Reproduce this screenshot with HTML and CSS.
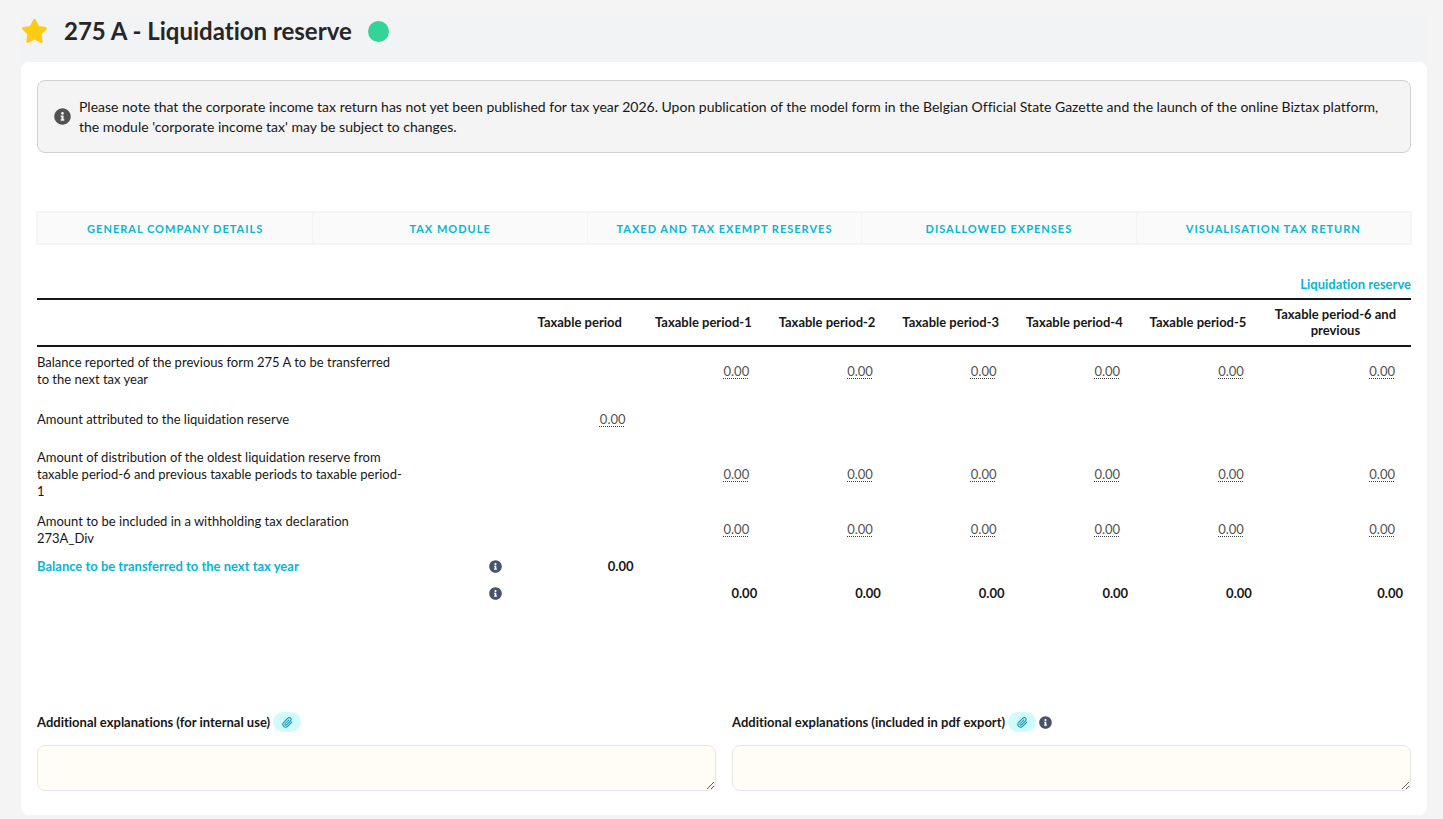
FILE: index.html
```html
<!DOCTYPE html>
<html lang="en">
<head>
<meta charset="utf-8">
<meta name="viewport" content="width=device-width, initial-scale=1">
<title>275 A - Liquidation reserve</title>
<link rel="stylesheet" href="styles.css">
</head>
<body>
<svg class="sprite" aria-hidden="true">
  <symbol id="icon-star" viewBox="0 0 576 512"><path d="M316.900 18C311.600 7 300.400 0 288.100 0s-23.400 7-28.800 18L195 150.300 51.400 171.500c-12 1.800-22 10.200-25.700 21.700s-.7 24.200 7.900 32.700L137.800 329 113.200 474.700c-2 12 3 24.200 12.900 31.300s23 8 33.800 2.300l128.300-68.500 128.300 68.500c10.800 5.700 23.900 4.900 33.800-2.300s14.900-19.300 12.900-31.300L438.500 329 542.700 225.900c8.600-8.500 11.700-21.200 7.900-32.700s-13.700-19.900-25.700-21.700L381.200 150.300 316.900 18z"/></symbol>
  <symbol id="icon-info" viewBox="0 0 512 512"><path d="M256 8C119 8 8 119.100 8 256c0 137 111 248 248 248s248-111 248-248C504 119.100 393 8 256 8zm0 110c23.200 0 42 18.800 42 42s-18.800 42-42 42-42-18.800-42-42 18.800-42 42-42zm56 254c0 6.600-5.400 12-12 12h-88c-6.600 0-12-5.400-12-12v-24c0-6.600 5.400-12 12-12h12v-64h-12c-6.600 0-12-5.400-12-12v-24c0-6.600 5.400-12 12-12h64c6.600 0 12 5.400 12 12v100h12c6.600 0 12 5.400 12 12v24z"/></symbol>
  <symbol id="icon-clip" viewBox="0 0 24 24"><path fill="none" stroke="currentColor" stroke-width="2.200" stroke-linecap="round" stroke-linejoin="round" d="M21.400 11.100l-9.200 9.200a6 6 0 0 1-8.500-8.500l9.200-9.200a4 4 0 0 1 5.700 5.700l-9.200 9.200a2 2 0 0 1-2.800-2.800l8.500-8.500"/></symbol>
</svg>

<div class="page">
  <header class="page-header">
    <svg class="star" aria-hidden="true"><use href="#icon-star"/></svg>
    <h1 class="title">275 A - Liquidation reserve</h1>
    <span class="status-dot"></span>
  </header>

  <main class="card">
    <div class="notice">
      <svg class="notice-icon" aria-hidden="true"><use href="#icon-info"/></svg>
      <p class="notice-text">Please note that the corporate income tax return has not yet been published for tax year 2026. Upon publication of the model form in the Belgian Official State Gazette and the launch of the online Biztax platform, the module 'corporate income tax' may be subject to changes.</p>
    </div>

    <nav class="tabs">
      <a class="tab" href="#">General company details</a>
      <a class="tab" href="#">Tax module</a>
      <a class="tab" href="#">Taxed and tax exempt reserves</a>
      <a class="tab" href="#">Disallowed expenses</a>
      <a class="tab" href="#">Visualisation tax return</a>
    </nav>

    <table class="reserve">
      <caption class="caption">Liquidation reserve</caption>
      <colgroup>
        <col class="col-label"><col class="col-icon">
        <col class="col-period"><col class="col-period"><col class="col-period"><col class="col-period"><col class="col-period"><col class="col-period">
        <col class="col-last">
      </colgroup>
      <thead>
        <tr>
          <td></td><td></td>
          <th scope="col">Taxable period</th>
          <th scope="col">Taxable period-1</th>
          <th scope="col">Taxable period-2</th>
          <th scope="col">Taxable period-3</th>
          <th scope="col">Taxable period-4</th>
          <th scope="col">Taxable period-5</th>
          <th scope="col">Taxable period-6 and previous</th>
        </tr>
      </thead>
      <tbody>
        <tr class="entry">
          <th scope="row">Balance reported of the previous form 275 A to be transferred to&nbsp;the next tax year</th><td></td><td></td>
          <td><a class="amount" href="#">0.00</a></td><td><a class="amount" href="#">0.00</a></td><td><a class="amount" href="#">0.00</a></td><td><a class="amount" href="#">0.00</a></td><td><a class="amount" href="#">0.00</a></td><td><a class="amount" href="#">0.00</a></td>
        </tr>
        <tr class="entry">
          <th scope="row">Amount attributed to the liquidation reserve</th><td></td>
          <td><a class="amount" href="#">0.00</a></td><td></td><td></td><td></td><td></td><td></td><td></td>
        </tr>
        <tr class="entry">
          <th scope="row">Amount of distribution of the oldest liquidation reserve from taxable period-6 and previous taxable periods to taxable period-<wbr>1</th><td></td><td></td>
          <td><a class="amount" href="#">0.00</a></td><td><a class="amount" href="#">0.00</a></td><td><a class="amount" href="#">0.00</a></td><td><a class="amount" href="#">0.00</a></td><td><a class="amount" href="#">0.00</a></td><td><a class="amount" href="#">0.00</a></td>
        </tr>
        <tr class="entry">
          <th scope="row">Amount to be included in a withholding tax declaration 273A_Div</th><td></td><td></td>
          <td><a class="amount" href="#">0.00</a></td><td><a class="amount" href="#">0.00</a></td><td><a class="amount" href="#">0.00</a></td><td><a class="amount" href="#">0.00</a></td><td><a class="amount" href="#">0.00</a></td><td><a class="amount" href="#">0.00</a></td>
        </tr>
        <tr class="total">
          <th scope="row">Balance to be transferred to the next tax year</th>
          <td class="info-cell"><svg class="info" aria-hidden="true"><use href="#icon-info"/></svg></td>
          <td>0.00</td><td></td><td></td><td></td><td></td><td></td><td></td>
        </tr>
        <tr class="total">
          <th></th>
          <td class="info-cell"><svg class="info" aria-hidden="true"><use href="#icon-info"/></svg></td>
          <td></td><td>0.00</td><td>0.00</td><td>0.00</td><td>0.00</td><td>0.00</td><td>0.00</td>
        </tr>
      </tbody>
    </table>

    <div class="explanations">
      <div class="field">
        <div class="field-head">
          <label for="internal">Additional explanations (for internal use)</label>
          <button class="attach" type="button" aria-label="Attach file"><svg class="clip" aria-hidden="true"><use href="#icon-clip"/></svg></button>
        </div>
        <textarea class="note" id="internal"></textarea>
      </div>
      <div class="field">
        <div class="field-head">
          <label for="export">Additional explanations (included in pdf export)</label>
          <button class="attach" type="button" aria-label="Attach file"><svg class="clip" aria-hidden="true"><use href="#icon-clip"/></svg></button>
          <svg class="info" aria-hidden="true"><use href="#icon-info"/></svg>
        </div>
        <textarea class="note" id="export"></textarea>
      </div>
    </div>
  </main>
</div>
</body>
</html>
```
FILE: styles.css
```css
* { box-sizing: border-box; }

body {
  margin: 0;
  background: #f4f4f4;
  color: #171717;
  font-family: Lato, "Liberation Sans", sans-serif;
  font-size: 13px;
  line-height: 17px;
  font-variant-ligatures: none;
}

.sprite { display: none; }
.page { padding: 15px 16px 4px 21px; }

.page-header {
  display: flex;
  align-items: center;
  height: 47px;
  padding-bottom: 15px;
  background: #f1f3f5;
}
.star { width: 27px; height: 24px; fill: #facc15; }
.title {
  margin: 0 16px;
  color: #262626;
  font-size: 24px;
  line-height: 32px;
  font-weight: 700;
}
.status-dot { width: 21px; height: 21px; border-radius: 50%; background: #34d399; }

.card {
  padding: 18px 16px 24px;
  border-radius: 8px;
  background: #fff;
}

.notice {
  display: flex;
  align-items: center;
  gap: 8px;
  padding: 16px 16px 15px;
  border: 1px solid #d1d1d1;
  border-radius: 8px;
  background: #f4f4f4;
}
.notice-icon { flex: none; width: 17px; height: 17px; margin-bottom: 2px; fill: #525252; }
.notice-text {
  margin: 0;
  font-size: 14px;
  line-height: 20px;
}

.tabs {
  display: grid;
  grid-template-columns: repeat(5, 1fr);
  margin: 58px -1px 0;
  border: 2px solid #f4f4f4;
  background: #fafafa;
}
.tab {
  padding: 7px 8px 6px;
  border-left: 1px solid #f4f4f4;
  color: #06b6d4;
  font-size: 11px;
  font-weight: 700;
  letter-spacing: 1px;
  text-align: center;
  text-decoration: none;
  text-transform: uppercase;
}
.tab:first-child { border-left: 0; }

.reserve {
  width: 100%;
  margin-top: 31px;
  border-collapse: collapse;
  table-layout: fixed;
}
.caption {
  padding-bottom: 5px;
  color: #06b6d4;
  font-weight: 700;
  text-align: right;
}
.col-label { width: 27%; }
.col-icon { width: 8%; }
.col-period { width: 9%; }
.col-last { width: 11%; }
.reserve th, .reserve td { padding: 0; }
.reserve thead th { padding: 5px 8px 7px; line-height: 16px; }
.reserve thead tr { height: 47px; border: solid #171717; border-width: 2px 0; }
.reserve tbody th { padding-right: 4px; font-weight: 400; text-align: left; }
.reserve tbody td { text-align: right; }
.entry { height: 49px; }
.reserve .entry th { padding-top: 5px; padding-bottom: 5px; }
.reserve .entry td { padding-right: 16px; }
.amount {
  color: #525252;
  text-decoration: underline dotted #404040 1px;
  text-decoration-skip-ink: none;
  text-underline-offset: 2px;
}
.total { height: 27px; }
.reserve tbody .total th { padding-bottom: 2px; color: #06b6d4; font-weight: 700; }
.reserve .total td { padding: 0 8px 2px 0; font-weight: 700; }
.reserve .total .info-cell { padding-right: 16px; }

.info { display: block; width: 13px; height: 13px; fill: #475569; }
.info-cell .info { margin-left: auto; }

.explanations {
  display: grid;
  grid-template-columns: 1fr 1fr;
  gap: 16px;
  margin-top: 104px;
}
.field-head { display: flex; align-items: center; gap: 3px; font-weight: 700; }
.attach {
  display: flex;
  align-items: center;
  justify-content: center;
  width: 28px;
  height: 20px;
  padding: 0;
  border: 0;
  border-radius: 10px;
  background: #cffafe;
  color: #0891b2;
}
.clip { width: 11px; height: 11px; }
.note {
  display: block;
  width: 100%;
  height: 46px;
  margin-top: 13px;
  border: 1px solid #e5e5e5;
  border-radius: 8px;
  background: #fffdf5;
  resize: vertical;
}
```
